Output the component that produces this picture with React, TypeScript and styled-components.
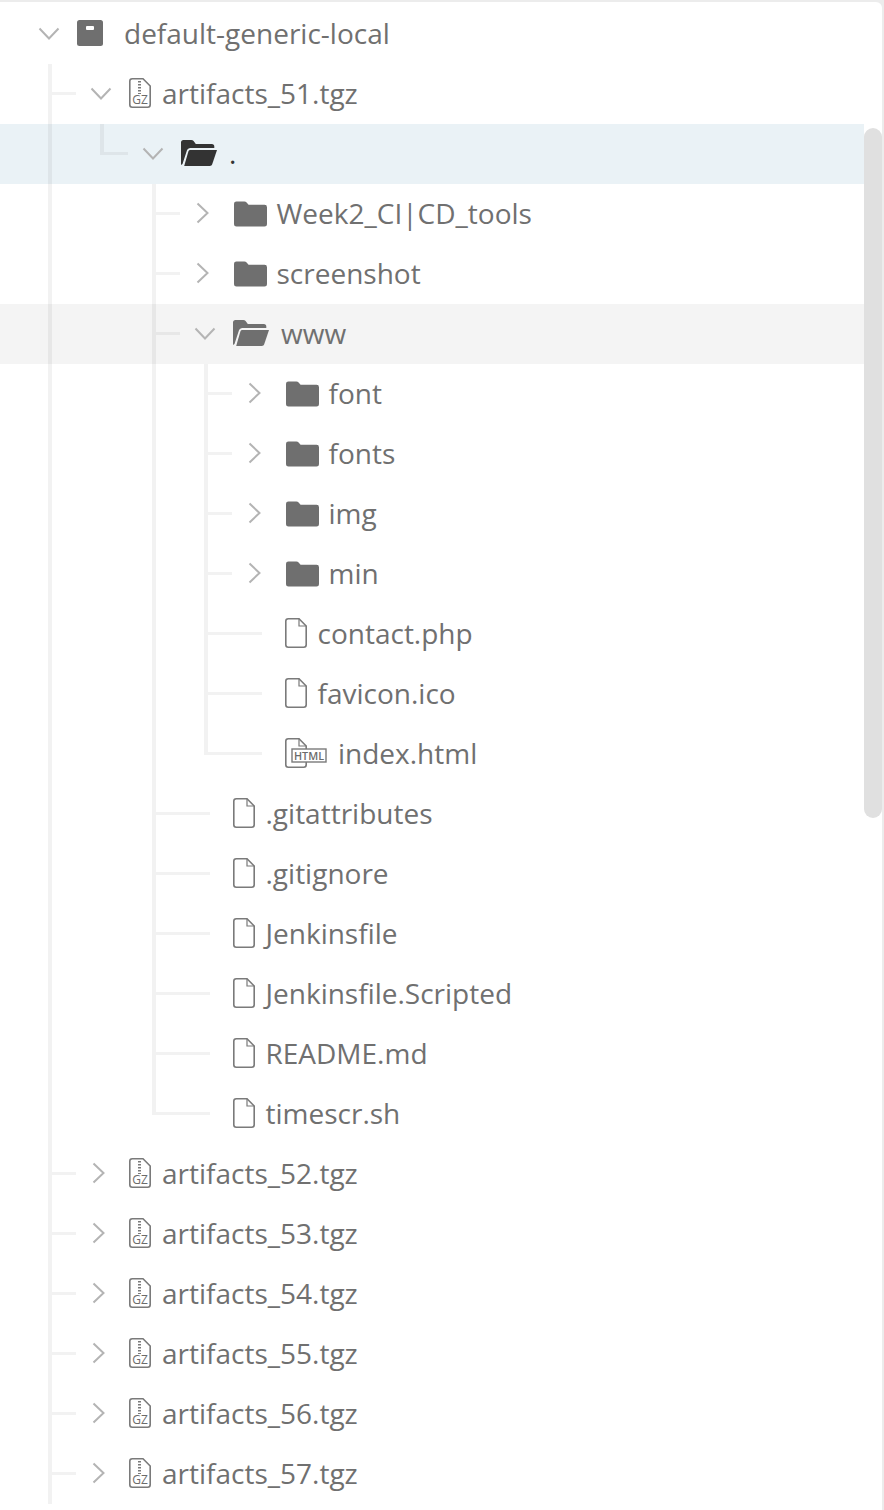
import styled, { createGlobalStyle } from "styled-components";

const GlobalStyle = createGlobalStyle`
  html, body {
    margin: 0;
    background: #ececec;
  }
`;

const Panel = styled.div`
  display: flex;
  width: 882px;
  height: 1508px;
  margin-top: 2px;
  background: #fff;
  border-top-right-radius: 6px;
  overflow: hidden;
  font-family: "Open Sans", sans-serif;
`;

const Tree = styled.div`
  position: relative;
  width: 864px;
  padding-top: 2px;
`;

const Track = styled.div`
  width: 18px;
  padding-top: 126px;
`;

const Thumb = styled.div`
  height: 690px;
  background: #e0e0e0;
  border-radius: 9px;
`;

const Branch = styled.div<{ $left: number; $tail: number }>`
  position: relative;

  &::before {
    content: "";
    position: absolute;
    z-index: 1;
    top: 0;
    bottom: ${(p) => p.$tail}px;
    left: ${(p) => p.$left}px;
    width: 4px;
    background: rgba(0, 0, 0, 0.05);
  }
`;

const Row = styled.div<{ $depth: number; $tone?: Tone; $tickLeft: number; $tickWidth: number }>`
  position: relative;
  display: flex;
  align-items: center;
  height: 60px;
  padding-left: ${(p) => 29 + p.$depth * 52}px;
  background: ${(p) =>
    p.$tone === "selected" ? "#eaf2f6" : p.$tone === "hover" ? "#f4f4f4" : "transparent"};

  &::before {
    content: "";
    display: ${(p) => (p.$tickWidth > 0 ? "block" : "none")};
    position: absolute;
    z-index: 1;
    top: 28px;
    left: ${(p) => p.$tickLeft}px;
    width: ${(p) => p.$tickWidth}px;
    height: 3px;
    background: rgba(0, 0, 0, 0.05);
  }
`;

const ChevronSlot = styled.div`
  display: flex;
  flex: none;
  align-items: center;
  width: 48px;
  height: 100%;
`;

const IconSlot = styled.div<{ $lift: number; $inset: number }>`
  display: flex;
  flex: none;
  margin-bottom: ${(p) => p.$lift}px;
  margin-left: ${(p) => p.$inset}px;
`;

const Label = styled.span<{ $gap: number; $dark?: boolean }>`
  margin-left: ${(p) => p.$gap}px;
  padding-bottom: 2px;
  font-size: 28px;
  line-height: 58px;
  white-space: nowrap;
  color: ${(p) => (p.$dark ? "#333" : "#707070")};
`;

const OpenChevron = styled.svg`
  margin-left: 9px;
`;

const ClosedChevron = styled.svg`
  margin-bottom: 2px;
  margin-left: 11px;
`;

const RepoIcon = () => (
  <svg width="26" height="26" viewBox="0 0 26 26">
    <rect width="26" height="26" rx="2.5" fill="#6f6f6f" />
    <rect x="9" y="6" width="8" height="4" rx="1" fill="#fff" />
  </svg>
);

const FileIcon = () => (
  <svg width="22" height="30" viewBox="0 0 22 30" fill="none" stroke="#7a7a7a" strokeWidth="1.6">
    <path d="M3.300.8H14l7.200 7.200v18.700a2.500 2.500 0 0 1-2.500 2.500H3.300a2.500 2.500 0 0 1-2.500-2.500V3.300A2.500 2.500 0 0 1 3.300.8Z" />
    <path d="M14 .8v7.200h7.200" strokeWidth="1.200" />
  </svg>
);

const GzIcon = () => (
  <svg width="22" height="30" viewBox="0 0 22 30" fill="none" stroke="#7a7a7a" strokeWidth="1.6">
    <path d="M3.300.8H14l7.200 7.200v18.700a2.500 2.500 0 0 1-2.500 2.500H3.300a2.500 2.500 0 0 1-2.500-2.500V3.300A2.500 2.500 0 0 1 3.300.8Z" />
    <path d="M10.500 3v13" strokeWidth="3" strokeDasharray="1.500 1.500" />
    <text x="11" y="26" textAnchor="middle" fontFamily="Open Sans" fontSize="12" fill="#6b6b6b" stroke="none">
      GZ
    </text>
  </svg>
);

const HtmlIcon = () => (
  <svg width="42" height="30" viewBox="0 0 42 30" fill="none" stroke="#7a7a7a" strokeWidth="1.600">
    <path d="M21.200 11V8L14 .8H3.300A2.500 2.500 0 0 0 .8 3.300v23.400a2.500 2.500 0 0 0 2.500 2.500h15.400a2.500 2.500 0 0 0 2.500-2.500V24" />
    <path d="M14 .8v7.200h7.200" strokeWidth="1.200" />
    <rect x="7" y="11" width="34" height="13" strokeWidth="1.400" />
    <text x="24" y="21.500" textAnchor="middle" fontFamily="Open Sans" fontSize="11" fontWeight="600" fill="#6b6b6b" stroke="none" textLength="30" lengthAdjust="spacingAndGlyphs">
      HTML
    </text>
  </svg>
);

const FolderIcon = () => (
  <svg width="33" height="26" viewBox="0 0 34 26">
    <path d="M2.500 0h8.200c1 0 1.700.4 2.300 1.100L15 3.500h16.500A2.500 2.500 0 0 1 34 6v17.500a2.500 2.500 0 0 1-2.500 2.500h-29A2.500 2.500 0 0 1 0 23.500v-21A2.500 2.500 0 0 1 2.500 0Z" fill="#6f6f6f" />
  </svg>
);

const OpenFolderIcon = ({ color }: { color: string }) => (
  <svg width="36" height="26" viewBox="0 0 36 26">
    <path d="M0 2.500A2.500 2.500 0 0 1 2.500 0h7.800c1 0 1.700.4 2.300 1.100L14.800 4h16a2.500 2.500 0 0 1 2.500 2.500V8H9.500c-1.800 0-3 .9-3.600 2.600L1.500 24 0 25Z" fill={color} />
    <path d="M9.500 10H36l-4.800 14.300c-.4 1.100-1.200 1.700-2.400 1.700H3.200l4.100-14.300c.3-1 1-1.700 2.200-1.700Z" fill={color} />
  </svg>
);

type Tone = "selected" | "hover";
type IconKind = "repo" | "gz" | "folder" | "file" | "html";

interface Node {
  name: string;
  icon: IconKind;
  open?: boolean;
  leaf?: boolean;
  tone?: Tone;
  more?: boolean; // list goes on below the fold
  gap?: number;
  children?: Node[];
}

const dir = (name: string): Node => ({ name, icon: "folder", gap: 9.5 });
const file = (name: string): Node => ({ name, icon: "file", leaf: true, gap: 10.5 });
const archive = (name: string): Node => ({ name, icon: "gz" });

const tree: Node = {
  name: "default-generic-local",
  icon: "repo",
  open: true,
  gap: 21,
  more: true,
  children: [
    {
      name: "artifacts_51.tgz",
      icon: "gz",
      open: true,
      children: [
        {
          name: ".",
          icon: "folder",
          open: true,
          tone: "selected",
          gap: 12,
          children: [
            dir("Week2_CI|CD_tools"),
            dir("screenshot"),
            {
              name: "www",
              icon: "folder",
              open: true,
              tone: "hover",
              gap: 12,
              children: [
                dir("font"),
                dir("fonts"),
                dir("img"),
                dir("min"),
                file("contact.php"),
                file("favicon.ico"),
                { name: "index.html", icon: "html", leaf: true, gap: 11 },
              ],
            },
            file(".gitattributes"),
            file(".gitignore"),
            file("Jenkinsfile"),
            file("Jenkinsfile.Scripted"),
            file("README.md"),
            file("timescr.sh"),
          ],
        },
      ],
    },
    archive("artifacts_52.tgz"),
    archive("artifacts_53.tgz"),
    archive("artifacts_54.tgz"),
    archive("artifacts_55.tgz"),
    archive("artifacts_56.tgz"),
    archive("artifacts_57.tgz"),
  ],
};

const rowCount = (node: Node): number =>
  1 + (node.children ?? []).reduce((sum, child) => sum + rowCount(child), 0);

const renderIcon = (node: Node) => {
  switch (node.icon) {
    case "repo":
      return <RepoIcon />;
    case "gz":
      return <GzIcon />;
    case "html":
      return <HtmlIcon />;
    case "file":
      return <FileIcon />;
    default:
      if (!node.open) return <FolderIcon />;
      return <OpenFolderIcon color={node.tone === "selected" ? "#333" : "#6f6f6f"} />;
  }
};

// closed folders sit on the row centre, everything else about 1px above it
const iconLift = (node: Node) => {
  if (node.icon === "folder" && !node.open) return 0;
  return node.icon === "repo" || node.icon === "folder" ? 2 : 3;
};

function TreeNode({ node, depth }: { node: Node; depth: number }) {
  const tickLeft = 52 + (depth - 1) * 52;
  const tickWidth = depth === 0 ? 0 : node.leaf ? 54 : 24;
  const last = node.children?.[node.children.length - 1];
  const tail = node.more || !last ? 0 : (rowCount(last) - 1) * 60 + 29;
  const closedFolder = node.icon === "folder" && !node.open;

  return (
    <>
      <Row $depth={depth} $tone={node.tone} $tickLeft={tickLeft} $tickWidth={tickWidth}>
        <ChevronSlot>
          {node.leaf ? null : node.open ? (
            <OpenChevron width="22" height="14" viewBox="0 0 22 14" fill="none">
              <path d="M1.500 1.500 11 11.500 20.500 1.500" stroke="#b4b4b4" strokeWidth="2" />
            </OpenChevron>
          ) : (
            <ClosedChevron width="14" height="22" viewBox="0 0 14 22" fill="none">
              <path d="M1.500 1.500 11.500 11 1.500 20.500" stroke="#b4b4b4" strokeWidth="2" />
            </ClosedChevron>
          )}
        </ChevronSlot>
        <IconSlot $lift={iconLift(node)} $inset={closedFolder ? 1 : 0}>
          {renderIcon(node)}
        </IconSlot>
        <Label $gap={node.gap ?? 11} $dark={node.tone === "selected"}>
          {node.name}
        </Label>
      </Row>
      {node.children ? (
        <Branch $left={48 + depth * 52} $tail={tail}>
          {node.children.map((child) => (
            <TreeNode key={child.name} node={child} depth={depth + 1} />
          ))}
        </Branch>
      ) : null}
    </>
  );
}

function App() {
  return (
    <>
      <GlobalStyle />
      <Panel>
        <Tree>
          <TreeNode node={tree} depth={0} />
        </Tree>
        <Track>
          <Thumb />
        </Track>
      </Panel>
    </>
  );
}

export default App;
